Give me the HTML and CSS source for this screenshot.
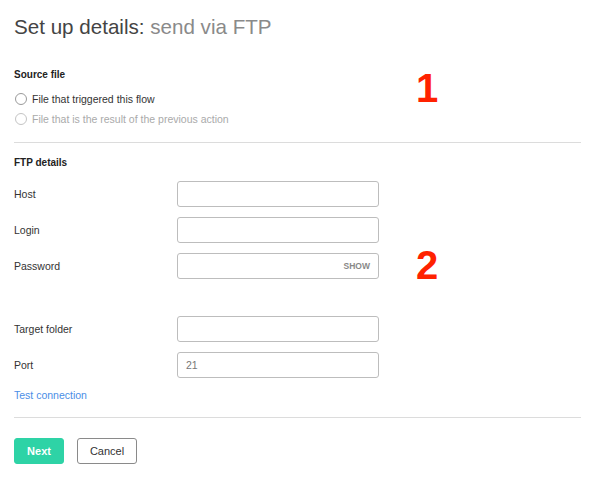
FILE: index.html
```html
<!DOCTYPE html>
<html>
<head>
<meta charset="utf-8">
<link rel="stylesheet" href="styles.css">
</head>
<body>
<div class="page">
  <h1 class="title">Set up details: <span class="muted">send via FTP</span></h1>

  <section class="section source">
    <h2 class="section-title">Source file</h2>
    <label class="radio"><span class="circle"></span>File that triggered this flow</label>
    <label class="radio disabled"><span class="circle"></span>File that is the result of the previous action</label>
    <span class="marker marker-1">1</span>
  </section>

  <hr class="divider">

  <section class="section ftp">
    <h2 class="section-title">FTP details</h2>
    <div class="row"><span class="label">Host</span><span class="input"></span></div>
    <div class="row"><span class="label">Login</span><span class="input"></span></div>
    <div class="row"><span class="label">Password</span><span class="input"><span class="show">SHOW</span></span></div>
    <div class="row gap-top"><span class="label">Target folder</span><span class="input"></span></div>
    <div class="row"><span class="label">Port</span><span class="input"><span class="value">21</span></span></div>
    <a class="link">Test connection</a>
    <span class="marker marker-2">2</span>
  </section>

  <hr class="divider">

  <div class="actions">
    <button class="btn btn-primary">Next</button>
    <button class="btn btn-secondary">Cancel</button>
  </div>
</div>
</body>
</html>
```

FILE: styles.css
```css
* { box-sizing: border-box; }
html, body { margin: 0; padding: 0; background: #fff; }
body {
  font-family: "Liberation Sans", Arial, sans-serif;
  color: #333;
  width: 598px;
  height: 483px;
  overflow: hidden;
}
.page {
  padding: 14px 17px 0 14px;
}
.title {
  margin: 0;
  font-size: 20.6px;
  font-weight: normal;
  color: #444;
  line-height: 26px;
}
.title .muted { color: #8a8a8a; }

.section { position: relative; }
.source { padding-top: 28px; padding-bottom: 13px; }
.section-title {
  margin: 0;
  font-size: 10px;
  font-weight: bold;
  color: #222;
  line-height: 14px;
}
.radio {
  display: flex;
  align-items: center;
  gap: 5px;
  font-size: 10.5px;
  color: #333;
  height: 20px;
}
.source .section-title { margin-bottom: 7px; }
.radio .circle {
  width: 12px;
  height: 12px;
  border: 1px solid #9a9a9a;
  border-radius: 50%;
  margin-left: 1px;
  background: #fff;
}
.radio.disabled { color: #aaa; }
.radio.disabled .circle { border-color: #c4c4c4; }

.marker {
  position: absolute;
  font-family: "Liberation Sans", Arial, sans-serif;
  font-weight: bold;
  font-size: 40px;
  line-height: 40px;
  color: #ff2200;
}
.marker-1 { left: 402px; top: 28px; }
.marker-2 { left: 402px; top: 102px; }

.divider {
  margin: 0;
  border: 0;
  border-top: 1px solid #dcdcdc;
  height: 0;
}

.ftp { padding-top: 13px; padding-bottom: 15px; }
.ftp .section-title { margin-bottom: 11px; }
.row {
  display: flex;
  align-items: center;
  height: 26px;
  margin-bottom: 10px;
}
.row.gap-top { margin-top: 37px; }
.label {
  width: 163px;
  font-size: 10.5px;
  color: #333;
}
.input {
  width: 202px;
  height: 26px;
  border: 1px solid #bdbdbd;
  border-radius: 3px;
  display: flex;
  align-items: center;
  padding: 0 8px;
  background: #fff;
}
.show {
  margin-left: auto;
  font-size: 8.5px;
  font-weight: bold;
  color: #888;
}
.value {
  font-size: 10.5px;
  color: #777;
}
.link {
  display: block;
  font-size: 10.5px;
  color: #4a8ee6;
  line-height: 14px;
  margin-top: 2px;
}

.actions {
  display: flex;
  gap: 13px;
  padding-top: 20px;
}
.btn {
  height: 26px;
  border-radius: 3px;
  font-family: "Liberation Sans", Arial, sans-serif;
  font-size: 11px;
  padding: 0;
  cursor: pointer;
}
.btn-primary {
  width: 50px;
  background: #2ed3a6;
  border: 1px solid #2ed3a6;
  color: #fff;
  font-weight: bold;
}
.btn-secondary {
  width: 60px;
  background: #fff;
  border: 1px solid #8a8a8a;
  color: #333;
}
```
